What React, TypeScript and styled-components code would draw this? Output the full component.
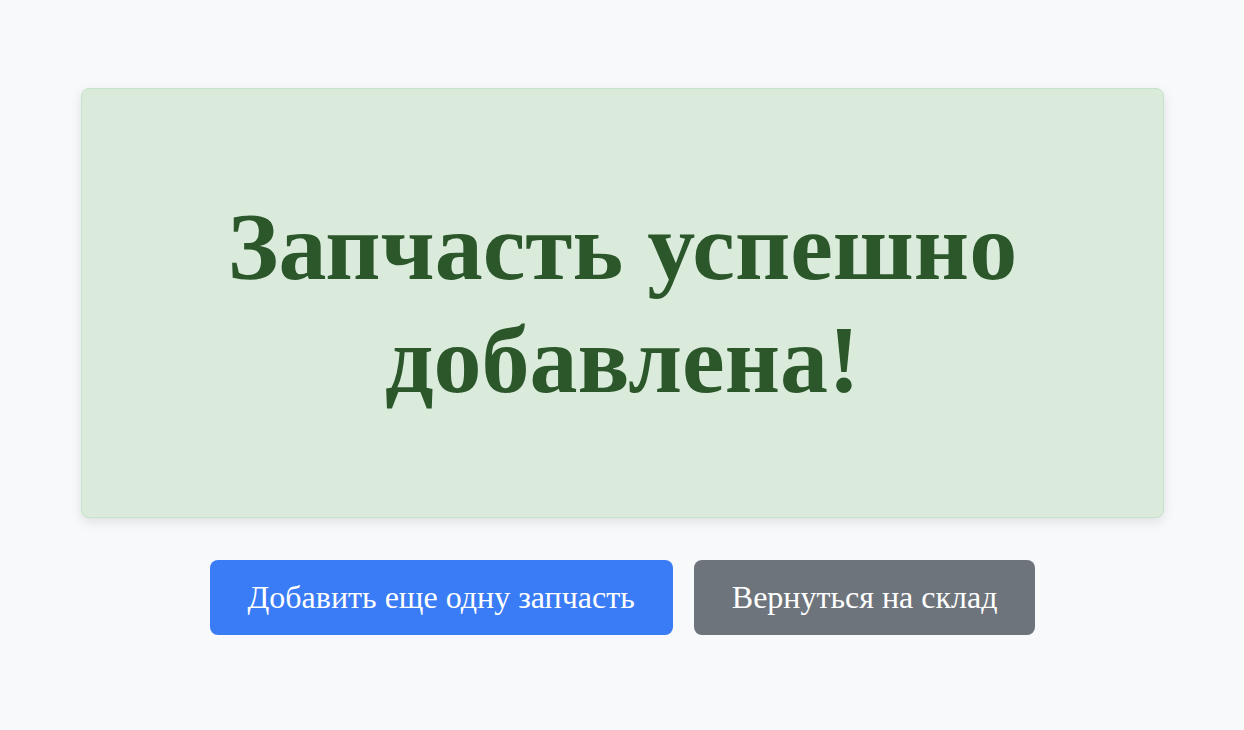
import React from 'react';
import styled, { createGlobalStyle } from 'styled-components';

const GlobalStyle = createGlobalStyle`
  html, body {
    margin: 0;
    padding: 0;
    background-color: #f8f9fa;
    font-family: "Liberation Serif", "Times New Roman", serif;
  }
`;

const Page = styled.main`
  min-height: 730px;
  box-sizing: border-box;
  padding: 88px 80px 0 81px;
  display: flex;
  flex-direction: column;
  align-items: stretch;
`;

const Card = styled.section`
  box-sizing: border-box;
  height: 430px;
  display: flex;
  align-items: center;
  justify-content: center;
  background-color: #daebdb;
  border: 1px solid #c6e2c9;
  border-radius: 8px;
  box-shadow: 0 4px 12px rgba(0, 0, 0, 0.1);
  padding: 0 60px;
`;

const Title = styled.h1`
  margin: 0;
  text-align: center;
  color: #2b572b;
  font-size: 96px;
  font-weight: 700;
  line-height: 113px;
`;

const Actions = styled.div`
  display: flex;
  justify-content: center;
  gap: 21px;
  margin-top: 42px;
`;

const Button = styled.button<{ $variant: 'primary' | 'secondary' }>`
  height: 75px;
  padding: 0 38px;
  border: none;
  border-radius: 8px;
  color: #ffffff;
  font-family: "Liberation Serif", "Times New Roman", serif;
  font-size: 32px;
  cursor: pointer;
  background-color: ${(p) => (p.$variant === 'primary' ? '#3a7bf6' : '#6e747c')};
`;

export default function App() {
  return (
    <>
      <GlobalStyle />
      <Page>
        <Card>
          <Title>Запчасть успешно добавлена!</Title>
        </Card>
        <Actions>
          <Button $variant="primary">Добавить еще одну запчасть</Button>
          <Button $variant="secondary">Вернуться на склад</Button>
        </Actions>
      </Page>
    </>
  );
}
